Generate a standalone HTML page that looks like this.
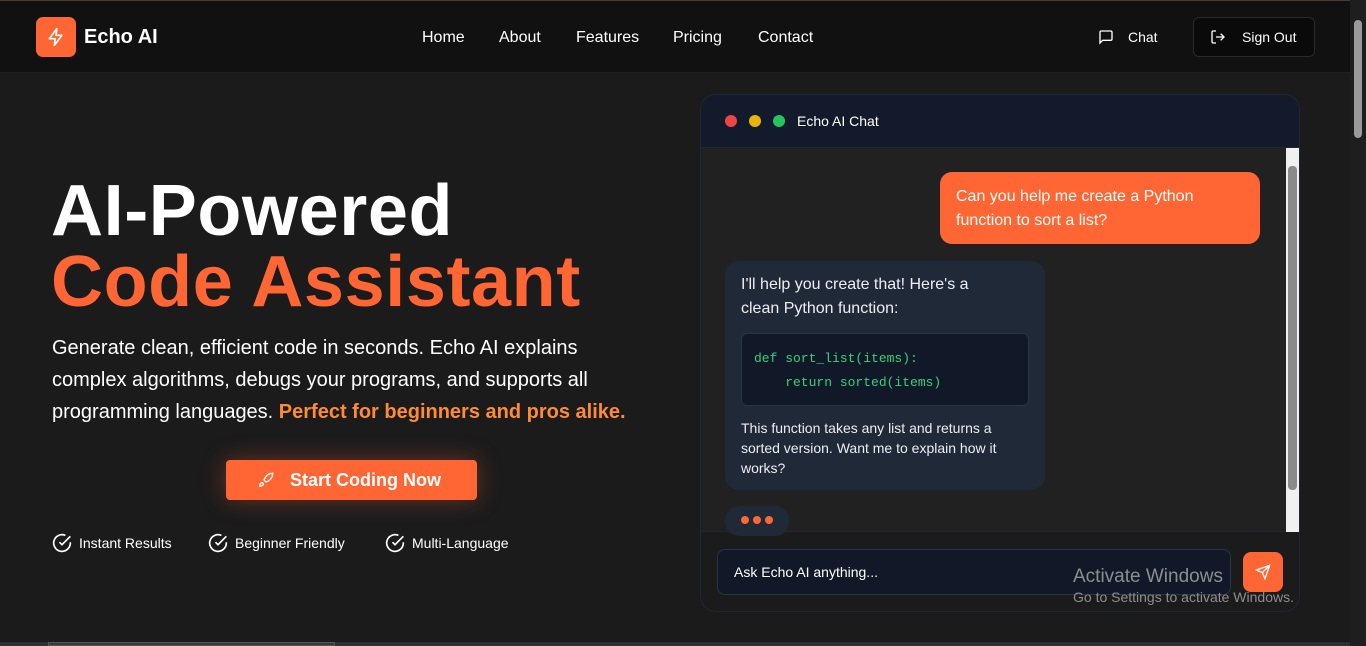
<!DOCTYPE html>
<html><head><meta charset="utf-8"><style>
*{box-sizing:border-box;margin:0;padding:0}
body{width:1366px;height:646px;overflow:hidden;background:#1b1b1b;font-family:"Liberation Sans",sans-serif;color:#fff;position:relative}
.top{position:absolute;top:0;left:0;width:1350px;height:1px;background:#4a3a30}
nav{position:absolute;top:1px;left:0;width:1350px;height:72px;background:#111;border-bottom:1px solid #231f1c}
.logo{position:absolute;left:36px;top:16px;width:40px;height:40px;background:#ff6633;border-radius:7px}
.logo svg{position:absolute;left:10px;top:10px}
.brand{position:absolute;left:84px;top:25px;font-size:20px;font-weight:bold}
.links{position:absolute;top:28px;font-size:16px;color:#fff}
.links span{position:absolute;white-space:nowrap}
.chat{position:absolute;left:1098px;top:28px;font-size:14px}
.so{position:absolute;left:1193px;top:16px;width:122px;height:40px;background:#0a0a0a;border:1px solid #2a2a2a;border-radius:6px;font-size:14px}
.sb{position:absolute;right:0;top:0;width:16px;height:646px;background:#1e1e1e}
.sb .th{position:absolute;left:4px;top:20px;width:8px;height:118px;background:#9a9a9a;border-radius:4px}
h1{position:absolute;left:51px;top:176px;font-size:72px;line-height:71px;font-weight:bold;white-space:nowrap;letter-spacing:0.6px}
h1 .o{color:#ff6633}
p.d{position:absolute;left:52px;top:332px;font-size:20px;line-height:32px;white-space:nowrap}
p.d b{color:#ff8c33;font-weight:bold}
.btn{position:absolute;left:226px;top:460px;width:251px;height:40px;background:#ff6633;border-radius:4px;box-shadow:0 0 24px rgba(255,102,51,.35);font-weight:bold;font-size:18px}
.feat{position:absolute;top:533px;font-size:14px;white-space:nowrap}
.feat svg{vertical-align:-5px;margin-right:7px}
.card{position:absolute;left:700px;top:94px;width:600px;height:518px;border:1px solid #1e2638;border-radius:16px;background:#1b1b1b;overflow:hidden}
.hd{height:53px;background:#131a2b;border-bottom:1px solid #1e2638;position:relative}
.dot{position:absolute;top:20px;width:12px;height:12px;border-radius:50%}
.body{position:absolute;top:53px;left:0;width:598px;height:384px;background:#212121;border-bottom:1px solid #1e2638}
.csb{position:absolute;left:585px;top:0;width:13px;height:384px;background:#f0f0f0}
.csb .th{position:absolute;left:2px;top:18px;width:9px;height:324px;background:#8a8a8a;border-radius:4px}
.u{position:absolute;left:239px;top:24px;width:320px;height:72px;background:#ff6633;border-radius:12px;padding:13px 16px;font-size:16px;line-height:24px}
.a{position:absolute;left:24px;top:113px;width:320px;height:229px;background:#1f2937;border-radius:14px;padding:12px 16px;font-size:16px;line-height:24px;color:#eee}
.a .t{padding-right:24px}
.code{margin-top:12px;background:#111827;border:1px solid #2b3446;border-radius:6px;height:73px;padding:13px 12px;font-family:"Liberation Mono",monospace;font-size:13px;line-height:24px;color:#34d27b;white-space:pre}
.a .s{font-size:14px;line-height:20px;margin-top:12px}
.ty{position:absolute;left:24px;top:358px;width:64px;height:30px;background:#1f2937;border-radius:14px}
.ty i{position:absolute;top:10px;width:8px;height:8px;border-radius:50%;background:#ff6633}
.inp{position:absolute;left:16px;top:454px;width:514px;height:46px;background:#111827;border:1px solid #2b3446;border-radius:8px;font-size:14px;padding:14px 16px}
.send{position:absolute;left:542px;top:457px;width:40px;height:40px;background:#ff6633;border-radius:8px}
.win{position:absolute;left:1073px;top:566px;color:#8e8e8e;font-size:19px;white-space:nowrap}
.win small{display:block;font-size:14px;margin-top:1px}
.hsb{position:absolute;left:0;top:642px;width:1350px;height:4px;background:#2a3033}
.hsb i{position:absolute;left:48px;top:0;width:287px;height:4px;background:#3a3a3a;border:1px solid #555}
</style></head><body>
<div class="top"></div>
<nav>
<div class="logo"><svg width="20" height="20" viewBox="0 0 24 24" fill="none" stroke="#fff" stroke-width="2" stroke-linejoin="round"><path d="M13 2 4 14h7l-1 8 9-12h-7z"/></svg></div>
<div class="brand">Echo AI</div>
<div class="links"><span style="left:422px">Home</span><span style="left:499px">About</span><span style="left:576px">Features</span><span style="left:673px">Pricing</span><span style="left:758px">Contact</span></div>
<div class="chat"><svg width="16" height="16" viewBox="0 0 24 24" fill="none" stroke="#fff" stroke-width="2" style="vertical-align:-3px"><path d="M21 15a2 2 0 0 1-2 2H7l-4 4V5a2 2 0 0 1 2-2h14a2 2 0 0 1 2 2z"/></svg><span style="margin-left:14px">Chat</span></div>
<div class="so"><svg width="16" height="16" viewBox="0 0 24 24" fill="none" stroke="#fff" stroke-width="2" style="position:absolute;left:16px;top:11px"><path d="M9 21H5a2 2 0 0 1-2-2V5a2 2 0 0 1 2-2h4M16 17l5-5-5-5M21 12H9"/></svg><span style="position:absolute;left:48px;top:11px">Sign Out</span></div>
</nav>
<div class="sb"><div class="th"></div></div>
<h1>AI-Powered<br><span class="o">Code Assistant</span></h1>
<p class="d">Generate clean, efficient code in seconds. Echo AI explains<br>complex algorithms, debugs your programs, and supports all<br>programming languages. <b>Perfect for beginners and pros alike.</b></p>
<div class="btn"><svg width="16" height="16" viewBox="0 0 24 24" fill="none" stroke="#fff" stroke-width="2" style="position:absolute;left:32px;top:12px"><path d="M4.5 16.5c-1.5 1.3-2 5-2 5s3.7-.5 5-2c.7-.8.7-2.1-.1-2.9a2.2 2.2 0 0 0-2.9-.1zM12 15l-3-3a22 22 0 0 1 2-4A13 13 0 0 1 22 2c0 2.7-.8 7.5-6 11a22 22 0 0 1-4 2z"/></svg><span style="position:absolute;left:64px;top:10px">Start Coding Now</span></div>
<div class="feat" style="left:52px"><svg width="20" height="20" viewBox="0 0 24 24" fill="none" stroke="#fff" stroke-width="2"><path d="M22 11.1V12a10 10 0 1 1-5.9-9.1"/><path d="m9 11 3 3L22 4"/></svg>Instant Results</div>
<div class="feat" style="left:208px"><svg width="20" height="20" viewBox="0 0 24 24" fill="none" stroke="#fff" stroke-width="2"><path d="M22 11.1V12a10 10 0 1 1-5.9-9.1"/><path d="m9 11 3 3L22 4"/></svg>Beginner Friendly</div>
<div class="feat" style="left:385px"><svg width="20" height="20" viewBox="0 0 24 24" fill="none" stroke="#fff" stroke-width="2"><path d="M22 11.1V12a10 10 0 1 1-5.9-9.1"/><path d="m9 11 3 3L22 4"/></svg>Multi-Language</div>
<div class="card">
<div class="hd"><div class="dot" style="left:24px;background:#ef4444"></div><div class="dot" style="left:48px;background:#eab308"></div><div class="dot" style="left:72px;background:#22c55e"></div><span style="position:absolute;left:96px;top:18px;font-size:14px">Echo AI Chat</span></div>
<div class="body">
<div class="u">Can you help me create a Python function to sort a list?</div>
<div class="a"><div class="t">I'll help you create that! Here's a clean Python function:</div><div class="code">def sort_list(items):
    return sorted(items)</div><div class="s">This function takes any list and returns a sorted version. Want me to explain how it works?</div></div>
<div class="ty"><i style="left:16px"></i><i style="left:28px"></i><i style="left:40px"></i></div>
<div class="csb"><div class="th"></div></div>
</div>
<div class="inp">Ask Echo AI anything...</div>
<div class="send"><svg width="16" height="16" viewBox="0 0 24 24" fill="none" stroke="#fff" stroke-width="2" style="position:absolute;left:12px;top:12px"><path d="M22 2 11 13M22 2l-7 20-4-9-9-4z"/></svg></div>
</div>
<div class="win">Activate Windows<small>Go to Settings to activate Windows.</small></div>
<div class="hsb"><i></i></div>
</body></html>
